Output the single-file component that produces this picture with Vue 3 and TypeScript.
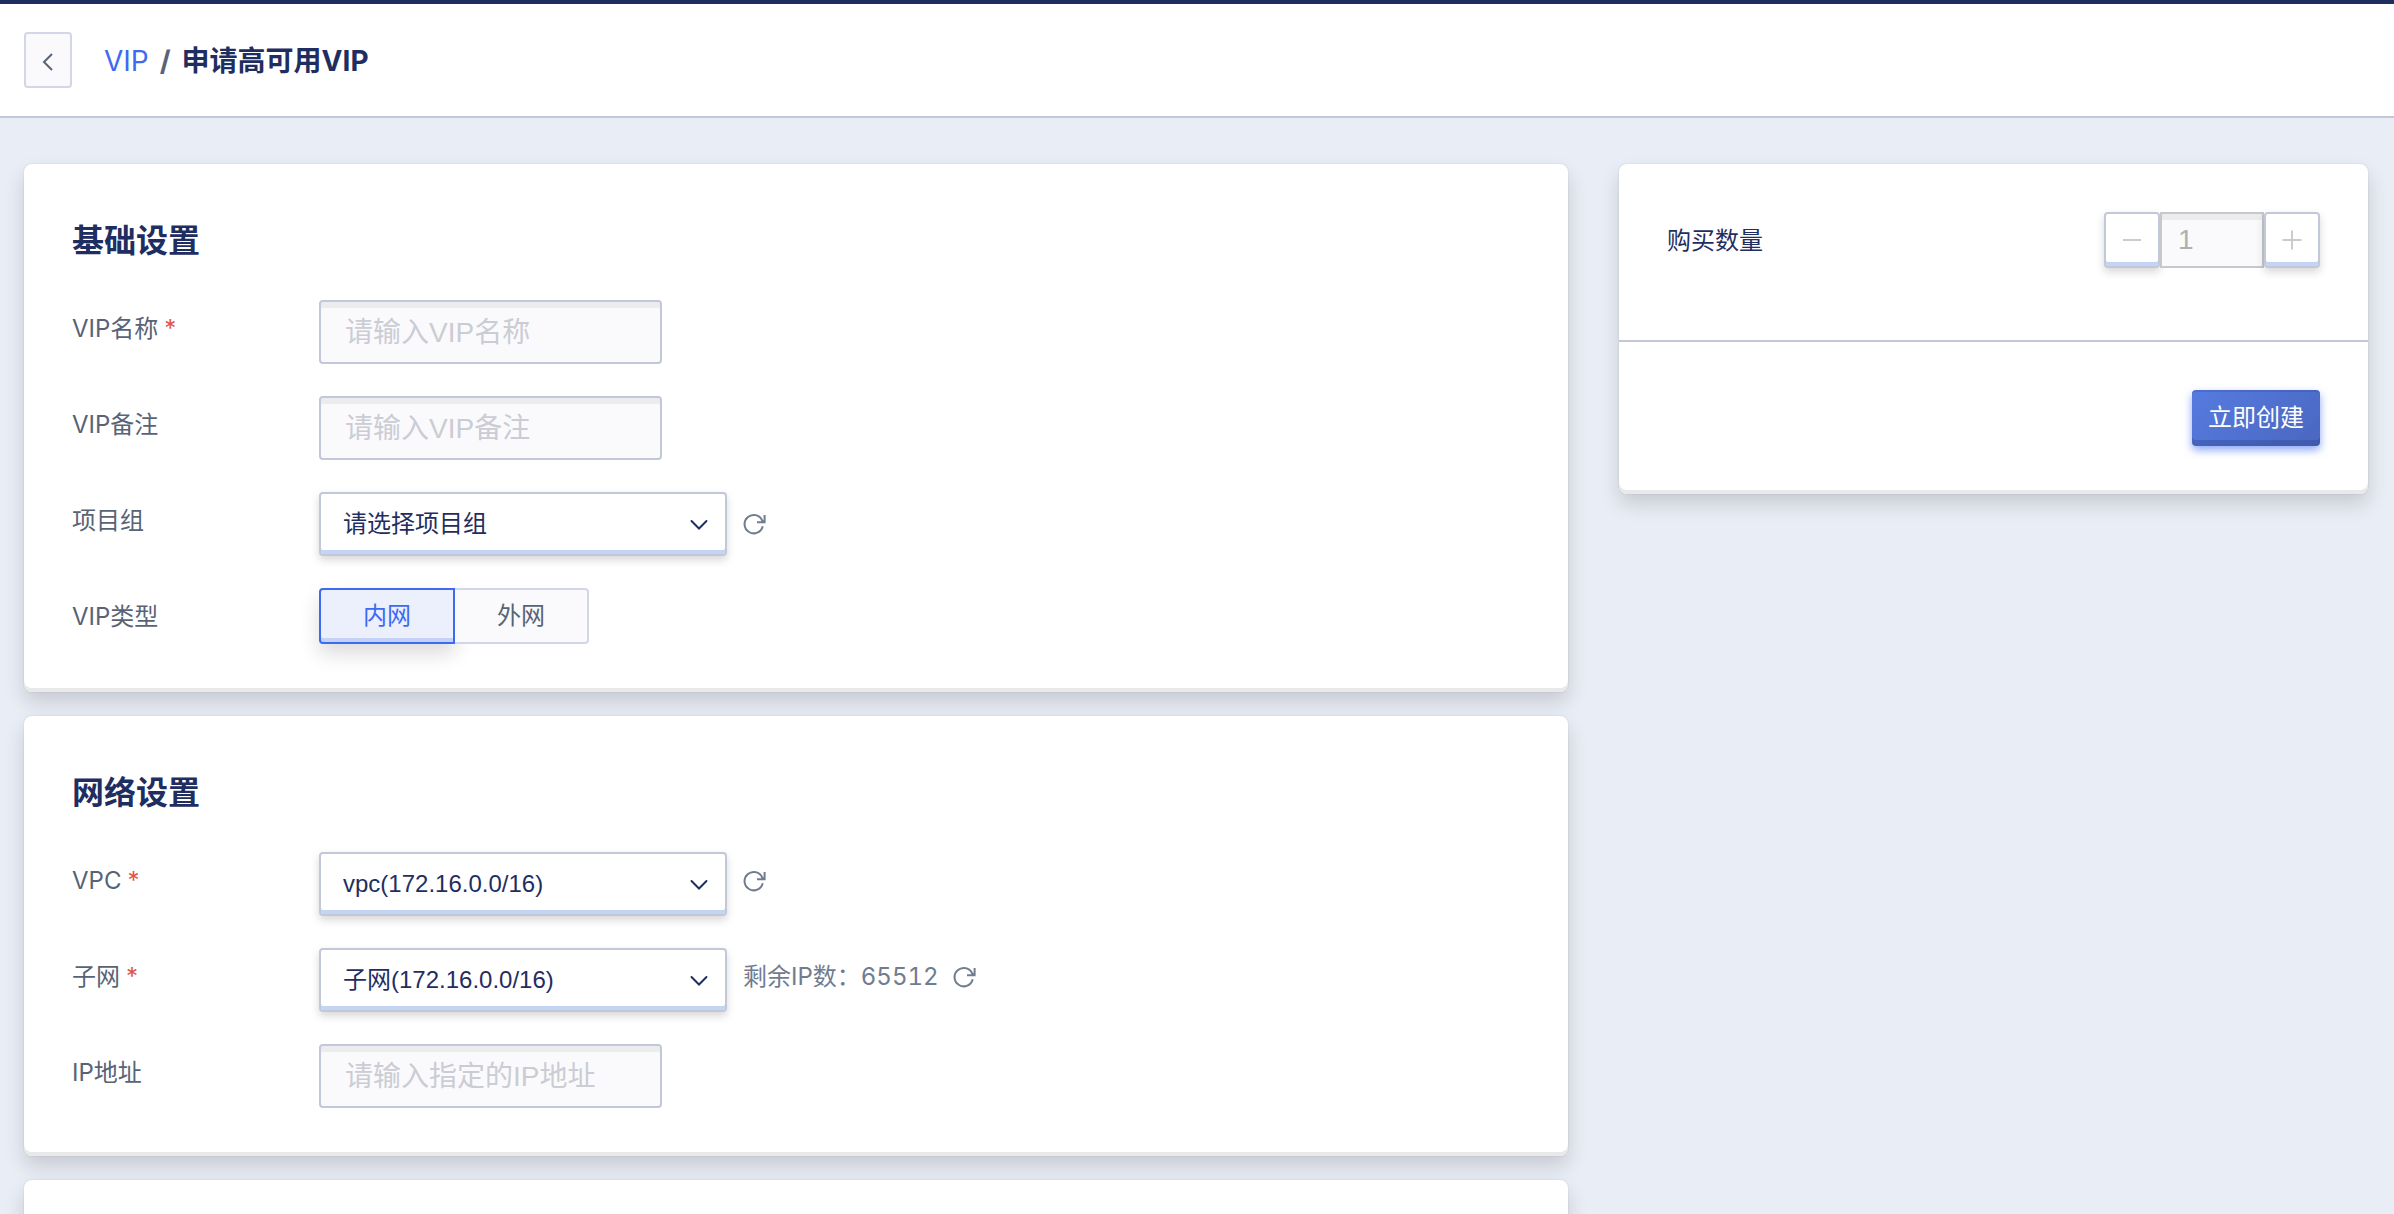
<script setup lang="ts">
import { ref } from 'vue'

const vipName = ref('')
const vipRemark = ref('')
const projectGroup = ref('')
const vipType = ref('internal')
const vpc = ref('vpc')
const subnet = ref('subnet')
const ipAddress = ref('')
const quantity = ref('1')
const remainingIps = 65512

const vipTypes = [
  { value: 'internal', label: '内网' },
  { value: 'external', label: '外网' },
]

const refreshPath = 'M19.7 14.2A9.2 9.2 0 1 1 19.2 8.5L21 10.3M21.6 3v7.3H14'
const chevronPath = 'm4.500 9 7.500 7.500 7.500-7.500'
</script>

<template>
  <div class="page">
    <header class="topbar">
      <button class="back" type="button" aria-label="返回">
        <svg width="24" height="24" viewBox="0 0 24 24"><path d="M16 4 8 12l8 8" /></svg>
      </button>
      <nav class="crumbs">
        <a href="#vip">VIP</a>
        <span class="slash">/</span>
        <h1>申请高可用VIP</h1>
      </nav>
    </header>

    <main class="content">
      <form class="main-col" @submit.prevent>
        <section class="card">
          <h2>基础设置</h2>
          <div class="row">
            <label class="name" for="vip-name">VIP名称<span class="req">*</span></label>
            <input id="vip-name" v-model="vipName" class="text" type="text" placeholder="请输入VIP名称" />
          </div>
          <div class="row">
            <label class="name" for="vip-remark">VIP备注</label>
            <input id="vip-remark" v-model="vipRemark" class="text" type="text" placeholder="请输入VIP备注" />
          </div>
          <div class="row">
            <label class="name" for="project">项目组</label>
            <div class="select">
              <select id="project" v-model="projectGroup">
                <option value="">请选择项目组</option>
              </select>
              <svg class="chevron" width="24" height="24" viewBox="0 0 24 24"><path :d="chevronPath" /></svg>
            </div>
            <button class="refresh centered" type="button" aria-label="刷新项目组">
              <svg width="24" height="24" viewBox="0 0 24 24"><path :d="refreshPath" /></svg>
            </button>
          </div>
          <div class="row" role="radiogroup" aria-labelledby="type-label">
            <span id="type-label" class="name">VIP类型</span>
            <div class="segments">
              <label v-for="t in vipTypes" :key="t.value" :class="['segment', { active: vipType === t.value }]">
                <input v-model="vipType" type="radio" name="vip-type" :value="t.value" />{{ t.label }}
              </label>
            </div>
          </div>
        </section>

        <section class="card">
          <h2>网络设置</h2>
          <div class="row">
            <label class="name" for="vpc">VPC<span class="req">*</span></label>
            <div class="select">
              <select id="vpc" v-model="vpc">
                <option value="vpc">vpc(172.16.0.0/16)</option>
              </select>
              <svg class="chevron" width="24" height="24" viewBox="0 0 24 24"><path :d="chevronPath" /></svg>
            </div>
            <button class="refresh" type="button" aria-label="刷新VPC">
              <svg width="24" height="24" viewBox="0 0 24 24"><path :d="refreshPath" /></svg>
            </button>
          </div>
          <div class="row">
            <label class="name" for="subnet">子网<span class="req">*</span></label>
            <div class="select">
              <select id="subnet" v-model="subnet">
                <option value="subnet">子网(172.16.0.0/16)</option>
              </select>
              <svg class="chevron" width="24" height="24" viewBox="0 0 24 24"><path :d="chevronPath" /></svg>
            </div>
            <span class="remaining">剩余IP数：<span class="count">{{ remainingIps }}</span></span>
            <button class="refresh" type="button" aria-label="刷新子网">
              <svg width="24" height="24" viewBox="0 0 24 24"><path :d="refreshPath" /></svg>
            </button>
          </div>
          <div class="row">
            <label class="name" for="ip">IP地址</label>
            <input id="ip" v-model="ipAddress" class="text" type="text" placeholder="请输入指定的IP地址" />
          </div>
        </section>

        <section class="card"></section>
      </form>

      <aside class="card side">
        <div class="amount">
          <label for="quantity">购买数量</label>
          <div class="stepper">
            <button type="button" aria-label="减少">
              <svg width="24" height="24" viewBox="0 0 24 24"><path d="M3 12h18" /></svg>
            </button>
            <input id="quantity" v-model="quantity" type="text" disabled />
            <button type="button" aria-label="增加">
              <svg width="24" height="24" viewBox="0 0 24 24"><path d="M2.500 12h19M12 2.500v19" /></svg>
            </button>
          </div>
        </div>
        <div class="actions">
          <button class="create" type="button">立即创建</button>
        </div>
      </aside>
    </main>
  </div>
</template>

<style>
body {
  margin: 0;
  background: #e9edf5;
}
</style>

<style scoped>
.page {
  height: 100vh;
  overflow-y: auto;
  scrollbar-width: none;
  color: #1f2e61;
  font-family: Inter, "Noto Sans CJK SC", sans-serif;
  font-size: 24px;
  line-height: 32px;
}
.page *,
.page *::before {
  box-sizing: border-box;
}
button,
input,
select {
  margin: 0;
  padding: 0;
  font: inherit;
  color: inherit;
}
svg {
  display: block;
  fill: none;
  stroke: currentColor;
  stroke-width: 2;
}
.topbar {
  display: flex;
  align-items: center;
  gap: 32px;
  height: 118px;
  padding: 0 24px;
  background: #fff;
  border-top: 4px solid #1f2e61;
  border-bottom: 2px solid #c3c8d9;
}
.back {
  display: grid;
  place-items: center;
  width: 48px;
  height: 56px;
  padding-top: 4px;
  color: #586376;
  background: #fafafc;
  border: 2px solid #d3d6e8;
  border-radius: 4px;
}
.crumbs {
  display: flex;
  align-items: center;
  gap: 11px;
  padding-top: 2px;
  font-size: 28px;
}
.crumbs a {
  color: #3d6af2;
  text-decoration: none;
}
.slash {
  color: #586376;
  font-weight: 700;
}
h1 {
  margin: 0;
  font-size: 28px;
  font-weight: 700;
}
.content {
  display: flex;
  align-items: flex-start;
  gap: 51px;
  padding: 46px 26px 24px 24px;
}
.main-col {
  display: flex;
  flex: 1544 1 0;
  flex-direction: column;
  gap: 24px;
}
.card {
  min-height: 120px;
  padding: 48px;
  background: #fff;
  border-radius: 8px;
  box-shadow: inset 0 -4px 0 #e9e9e9, 0 0 2px rgba(0, 0, 0, 0.12), 0 10px 20px rgba(0, 0, 0, 0.15);
}
h2 {
  margin: 0 0 30px;
  font-size: 32px;
  line-height: 58px;
}
.row {
  display: flex;
  align-items: flex-start;
  height: 64px;
  margin-bottom: 32px;
}
.row:last-child {
  margin-bottom: 0;
}
.row[role="radiogroup"] {
  height: 56px;
}
.name {
  width: 247px;
  line-height: 58px;
  color: #586376;
}
.req {
  margin-left: 6px;
  color: #e35444;
}
.text {
  width: 343px;
  height: 64px;
  padding: 2px 24px 0;
  font-family: "Liberation Sans", "Noto Sans CJK SC", sans-serif;
  font-size: 28px;
  background: #fafafc;
  border: 2px solid #c3c8d9;
  border-radius: 4px;
  box-shadow: inset 0 6px 0 #ececee;
}
.text::placeholder {
  color: #cbccd4;
  opacity: 1;
}
.select {
  position: relative;
  width: 408px;
}
.select select {
  display: block;
  width: 100%;
  height: 64px;
  padding: 0 48px 0 22px;
  font-family: "Liberation Sans", "Noto Sans CJK SC", sans-serif;
  appearance: none;
  background: #fff;
  border: 2px solid #c3c8d9;
  border-radius: 4px;
  box-shadow: inset 0 -4px 0 #c5d3f5, 0 4px 8px rgba(0, 0, 0, 0.16);
}
.chevron {
  position: absolute;
  top: 20px;
  right: 16px;
  stroke-linecap: round;
  pointer-events: none;
}
.refresh {
  display: grid;
  place-items: center;
  height: 58px;
  margin-left: 16px;
  color: #717c8f;
  background: none;
  border: 0;
}
.refresh.centered {
  height: 64px;
}
.remaining {
  margin-left: 16px;
  line-height: 58px;
  color: #717c8f;
}
.remaining + .refresh {
  margin-left: 14px;
}
.count {
  font-variant-numeric: tabular-nums;
}
.segments {
  display: flex;
}
.segment {
  width: 134px;
  height: 56px;
  line-height: 52px;
  text-align: center;
  color: #586376;
  background: #fafafc;
  border: 2px solid #d3d6e8;
  border-left: 0;
  border-radius: 0 4px 4px 0;
}
.segment.active {
  width: 136px;
  color: #3d6af2;
  background: #ebf0fc;
  border: 2px solid #3d6af2;
  border-radius: 4px 0 0 4px;
  box-shadow: inset 0 -4px 0 #c3d2f5, 0 10px 20px rgba(0, 0, 0, 0.14);
}
.segment input {
  position: absolute;
  opacity: 0;
}
.side {
  flex: 749 1 0;
  padding: 0;
}
.amount {
  display: flex;
  align-items: flex-start;
  justify-content: space-between;
  height: 178px;
  padding: 48px;
  line-height: 58px;
  border-bottom: 2px solid #c3c8d9;
}
.stepper {
  display: flex;
}
.stepper button {
  display: grid;
  place-items: center;
  width: 56px;
  height: 56px;
  color: #cbcbcb;
  background: #fff;
  border: 2px solid #c3c8d9;
  border-radius: 4px;
  box-shadow: inset 0 -4px 0 #c5d3f5, 0 4px 8px rgba(0, 0, 0, 0.16);
}
.stepper input {
  width: 104px;
  height: 56px;
  padding: 0 16px;
  font-family: "Liberation Sans", sans-serif;
  font-size: 28px;
  color: #b0b0b0;
  background: #fafafc;
  border: 2px solid #c8c8c8;
  box-shadow: inset 0 6px 0 #ececee;
}
.actions {
  display: flex;
  justify-content: flex-end;
  padding: 48px;
}
.create {
  width: 128px;
  height: 56px;
  color: #fff;
  background: linear-gradient(135deg, #567be0, #4a67c0);
  border: 0;
  border-radius: 4px;
  box-shadow: inset 0 2px 0 rgba(40, 60, 130, 0.2), inset 0 -6px 0 rgba(40, 60, 130, 0.3), 0 4px 8px rgba(61, 106, 242, 0.6);
}
</style>
